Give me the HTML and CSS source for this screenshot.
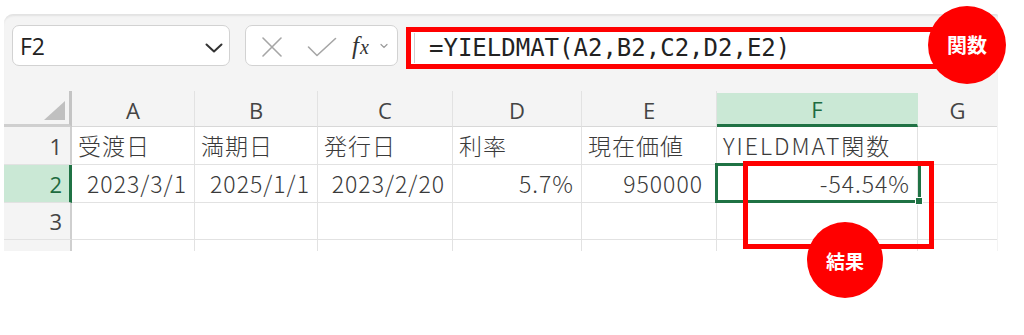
FILE: index.html
```
<!DOCTYPE html>
<html lang="ja">
<head>
<meta charset="utf-8">
<title>YIELDMAT</title>
<link rel="stylesheet" href="styles.css">
</head>
<body>
<div class="stage">
  <div class="panel">
    <div class="toolbar">
      <div class="namebox">
        <span class="namebox-text">F2</span>
        <svg class="namebox-chev" width="18" height="10" viewBox="0 0 18 10"><path d="M1.5 1.5 L9 8.5 L16.5 1.5" fill="none" stroke="#333" stroke-width="2" stroke-linecap="round" stroke-linejoin="round"/></svg>
      </div>
      <div class="fxbox">
        <svg class="ico-x" width="22" height="20" viewBox="0 0 22 20"><path d="M2 1 L20 19 M20 1 L2 19" fill="none" stroke="#a6a6a6" stroke-width="1.6" stroke-linecap="round"/></svg>
        <svg class="ico-check" width="30" height="20" viewBox="0 0 30 20"><path d="M1.5 10 L10 18.5 L28.5 1.5" fill="none" stroke="#a6a6a6" stroke-width="1.6" stroke-linecap="round" stroke-linejoin="round"/></svg>
        <span class="ico-fx"><span class="fx-f">f</span><span class="fx-x">x</span></span>
        <svg class="ico-chev" width="8" height="6" viewBox="0 0 8 6"><path d="M1 1.5 L4 4.5 L7 1.5" fill="none" stroke="#9a9a9a" stroke-width="1.2" stroke-linecap="round"/></svg>
      </div>
      <div class="formula">
        <div class="formula-inner">=YIELDMAT(A2,B2,C2,D2,E2)</div>
      </div>
    </div>
    <div class="sheet">
      <div class="grid">
        <div class="hcell corner"><span class="corner-tri"></span></div>
        <div class="hcell col">A</div>
        <div class="hcell col">B</div>
        <div class="hcell col">C</div>
        <div class="hcell col">D</div>
        <div class="hcell col">E</div>
        <div class="hcell col col-active">F</div>
        <div class="hcell col col-last">G</div>

        <div class="rowhead">1</div>
        <div class="cell txt">受渡日</div>
        <div class="cell txt">満期日</div>
        <div class="cell txt">発行日</div>
        <div class="cell txt">利率</div>
        <div class="cell txt">現在価値</div>
        <div class="cell txt txt-wide">YIELDMAT関数</div>
        <div class="cell last"></div>

        <div class="rowhead row-active">2</div>
        <div class="cell num">2023/3/1</div>
        <div class="cell num">2025/1/1</div>
        <div class="cell num">2023/2/20</div>
        <div class="cell num">5.7%</div>
        <div class="cell num num-wide">950000</div>
        <div class="cell num">-54.54%</div>
        <div class="cell last"></div>

        <div class="rowhead">3</div>
        <div class="cell"></div>
        <div class="cell"></div>
        <div class="cell"></div>
        <div class="cell"></div>
        <div class="cell"></div>
        <div class="cell"></div>
        <div class="cell last"></div>

        <div class="rowhead rowhead-cut"></div>
        <div class="cell"></div>
        <div class="cell"></div>
        <div class="cell"></div>
        <div class="cell"></div>
        <div class="cell"></div>
        <div class="cell"></div>
        <div class="cell last"></div>
      </div>
      <div class="selection"><span class="sel-handle"></span></div>
    </div>
  </div>
  <div class="result-box"></div>
  <div class="badge badge-fn">関数</div>
  <div class="badge badge-res">結果</div>
</div>
</body>
</html>
```

FILE: styles.css
```
* { box-sizing: border-box; }
html, body { margin: 0; padding: 0; background: #ffffff; }
.stage {
  position: relative;
  width: 1024px;
  height: 335px;
  overflow: hidden;
  padding-top: 14px;
  padding-left: 4px;
}
.panel {
  width: 994px;
  height: 237px;
  background: #f4f4f4;
  border-top-left-radius: 9px;
  border-top-right-radius: 2px;
  box-shadow: inset 0 3px 2px -1px #e2e2e2;
  overflow: hidden;
}
.toolbar {
  height: 77px;
  display: flex;
  align-items: flex-start;
  padding: 11px 0 0 8px;
}
.namebox {
  width: 218px;
  height: 41px;
  background: #ffffff;
  border: 1px solid #d2d2d2;
  border-radius: 7px;
  display: flex;
  align-items: center;
  justify-content: space-between;
  padding: 0 6px 0 7px;
}
.namebox-text {
  font-family: "Open Sans", "Liberation Sans", sans-serif;
  font-size: 23px;
  color: #222;
  line-height: 1;
  margin-top: 1px;
}
.namebox-chev { margin-top: 4px; }
.fxbox {
  width: 153px;
  height: 41px;
  margin-left: 15px;
  background: #ffffff;
  border: 1px solid #d2d2d2;
  border-radius: 7px;
  display: flex;
  align-items: center;
  padding-left: 15px;
}
.ico-x { margin-top: 2px; }
.ico-check { margin-left: 24px; margin-top: 2px; }
.ico-fx {
  margin-left: 15px;
  font-family: "Liberation Serif", "DejaVu Serif", serif;
  font-style: italic;
  color: #333;
  line-height: 1;
  display: flex;
  align-items: baseline;
}
.fx-f { font-size: 25px; }
.fx-x { font-size: 20px; margin-left: 1px; }
.ico-chev { margin-left: 11px; margin-top: 1px; }
.formula {
  width: 560px;
  height: 42px;
  margin-left: 8px;
  margin-top: 2px;
  border: 5px solid #ff0000;
  background: #ffffff;
  padding: 0;
  display: flex;
}
.formula-inner {
  flex: 1;
  margin: 1px 0 1px 3px;
  border-left: 1px solid #cfcfcf;
  padding-left: 14px;
  display: flex;
  align-items: center;
  font-family: "DejaVu Sans Mono", "Liberation Mono", monospace;
  font-size: 24px;
  color: #222;
  line-height: 1;
}
.sheet {
  position: relative;
  height: 160px;
  overflow: hidden;
}
.grid {
  display: grid;
  grid-template-columns: 68px 123px 123px 135px 129px 135px 201px 79px;
  grid-template-rows: 36px 38px 38px 37px 38px;
}
.hcell {
  background: #f4f4f4;
  border-bottom: 1px solid #d8d8d8;
  font-family: "Open Sans", "Liberation Sans", sans-serif;
  font-size: 22px;
  color: #444;
  display: flex;
  align-items: center;
  justify-content: center;
  line-height: 1;
}
.col {
  border-right: 1px solid #e2e2e2;
  padding-top: 2px;
}
.col-last { border-right: none; }
.col-active {
  background: #cae8d5;
  color: #1e6b3f;
  border-bottom: 3px solid #1f7244;
  border-right-color: #cae8d5;
  margin-top: 2px;
  padding-top: 0;
}
.corner {
  position: relative;
  border-right: 3px solid #c4c4c4;
  border-bottom: 3px solid #cfcfcf;
}
.corner-tri {
  position: absolute;
  right: 4px;
  bottom: 4px;
  width: 0;
  height: 0;
  border-left: 21px solid transparent;
  border-bottom: 19px solid #c0c0c0;
}
.rowhead {
  background: #f4f4f4;
  border-right: 2px solid #cfcfcf;
  border-bottom: 1px solid #e2e2e2;
  font-family: "Open Sans", "Liberation Sans", sans-serif;
  font-size: 22px;
  color: #444;
  display: flex;
  align-items: center;
  justify-content: flex-end;
  padding-right: 8px;
  line-height: 1;
}
.row-active {
  background: #cae8d5;
  color: #1e6b3f;
  border-right: 3px solid #1f7244;
  padding-right: 7px;
}
.cell {
  background: #ffffff;
  border-right: 1px solid #e2e2e2;
  border-bottom: 1px solid #e2e2e2;
  font-family: "Noto Sans CJK JP", "Noto Sans", sans-serif;
  font-weight: 300;
  font-size: 23px;
  color: #3a3a3a;
  display: flex;
  align-items: center;
  line-height: 1;
  white-space: nowrap;
}
.cell.last { border-right: none; }
.txt { padding-left: 6px; letter-spacing: 1px; }
.txt-wide { letter-spacing: 2px; }
.num { justify-content: flex-end; padding-right: 7px; letter-spacing: 1px; }
.num-wide { padding-right: 13px; }
.selection {
  position: absolute;
  left: 711px;
  top: 72px;
  width: 206px;
  height: 40px;
  border: 3px solid #1f7244;
}
.sel-handle {
  position: absolute;
  right: -5px;
  bottom: -5px;
  width: 8px;
  height: 8px;
  background: #1f7244;
  border: 1px solid #ffffff;
}
.result-box {
  position: absolute;
  left: 743px;
  top: 161px;
  width: 191px;
  height: 88px;
  border: 5px solid #ff0000;
}
.badge {
  position: absolute;
  border-radius: 50%;
  background: #ff0000;
  color: #ffffff;
  font-family: "Noto Sans CJK JP", sans-serif;
  font-weight: 700;
  display: flex;
  align-items: center;
  justify-content: center;
  line-height: 1;
}
.badge-fn {
  left: 928px;
  top: 6px;
  width: 78px;
  height: 78px;
  font-size: 20px;
}
.badge-res {
  left: 807px;
  top: 222px;
  width: 76px;
  height: 76px;
  font-size: 19px;
}
```
